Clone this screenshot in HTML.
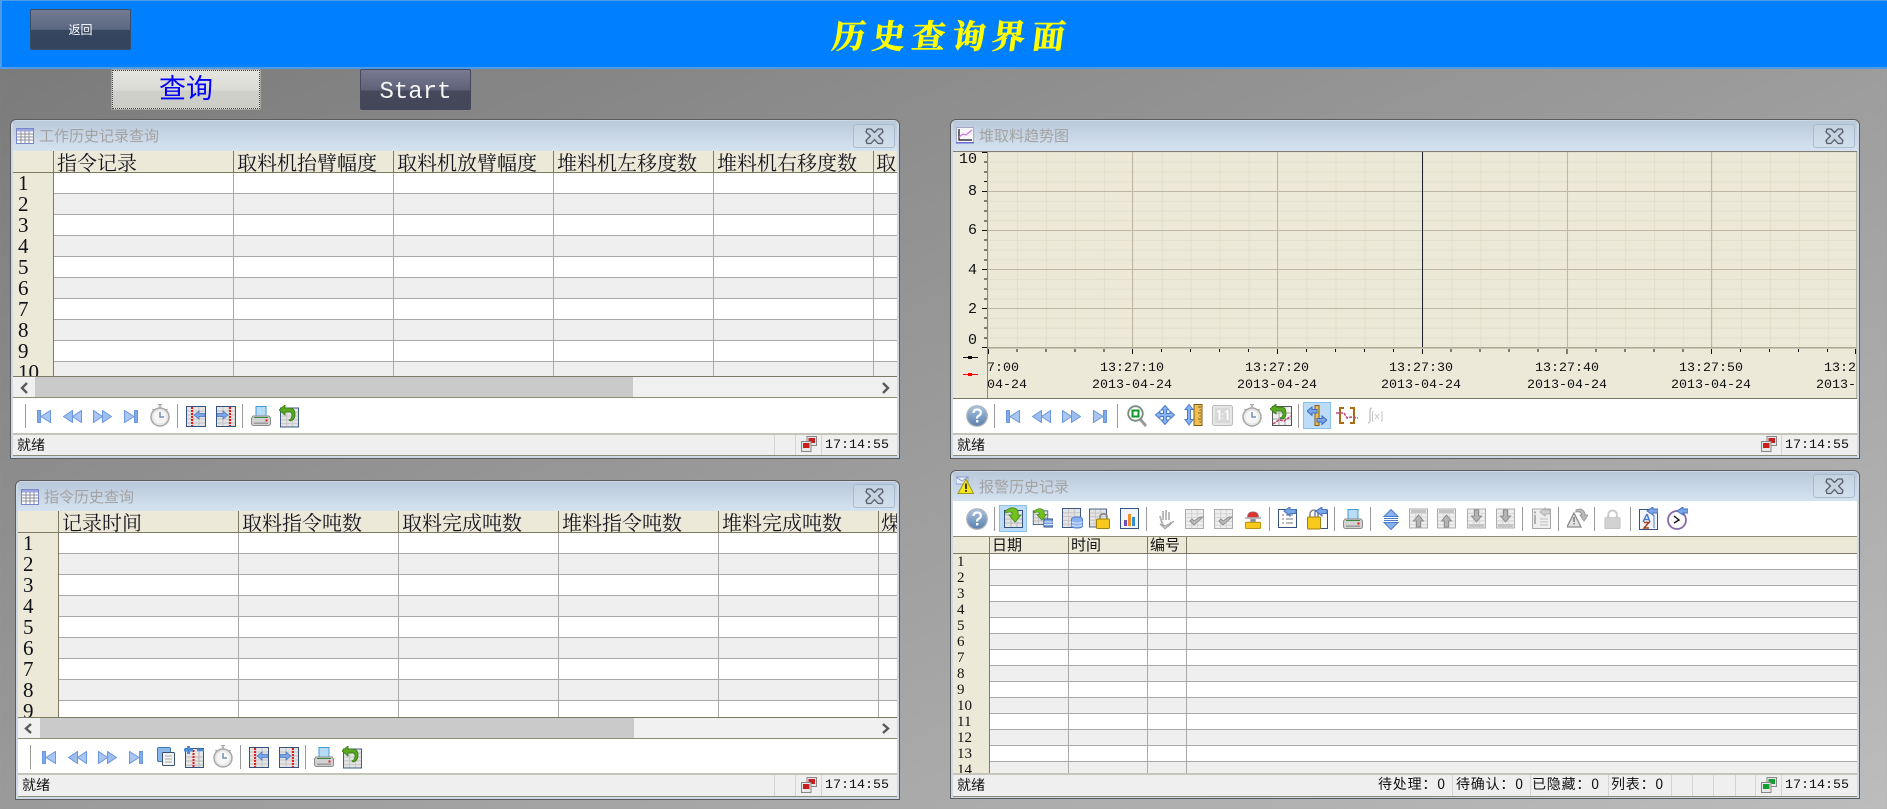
<!DOCTYPE html>
<html lang="zh"><head><meta charset="utf-8"><title>历史查询界面</title>
<style>
html,body{margin:0;padding:0;width:1887px;height:809px;overflow:hidden}
body{position:relative;background:linear-gradient(to bottom right,#787878,#9a9a9a 50%,#bcbcbc);font-family:"Liberation Serif","Noto Serif CJK SC",serif;color:#000}
div{position:absolute;box-sizing:border-box;white-space:nowrap}
.win{background:#d8e4f0;border:1px solid #5c5c5c;border-radius:6px 6px 0 0;box-shadow:inset 0 0 0 2px #cdd9e6}
.tb{height:31px;background:linear-gradient(#bac9da,#d6e4f2)}
.ttl{font:15px/20px "Noto Sans CJK SC",sans-serif;color:#a3a3a3}
.cl{width:42px;height:24px;border:1px solid #a7bbd0;border-radius:3px;background:linear-gradient(#c3d1e0,#d3e0ec)}
.tbl{overflow:hidden;background:#fff}
.rows{background:repeating-linear-gradient(#fff 0 20px,#a9a9a9 20px 21px,#efefef 21px 41px,#a9a9a9 41px 42px)}
.rows4{background:repeating-linear-gradient(#fff 0 15px,#a9a9a9 15px 16px,#efefef 16px 31px,#a9a9a9 31px 32px)}
.hd{top:0;height:22px;background:#ece9d8;border-bottom:1px solid #7d7a64;border-right:1px solid #7d7a64;font:20px/21px "Noto Serif CJK SC",serif;padding-left:3px;color:#15151f;overflow:hidden}
.hd4{top:0;height:17px;background:#ece9d8;border-bottom:1px solid #7d7a64;border-right:1px solid #7d7a64;font:15px/16px "Noto Sans CJK SC",sans-serif;padding-left:2px;color:#111;overflow:hidden}
.rn{left:0;top:22px;bottom:0;background:#ece9d8;border-right:1px solid #7d7a64;font:21px/21px "Liberation Serif",serif;padding-left:5px;white-space:pre-line;overflow:hidden;color:#101018}
.rn4{left:0;top:17px;bottom:0;background:#ece9d8;border-right:1px solid #7d7a64;font:15px/16px "Liberation Serif",serif;padding-left:4px;white-space:pre-line;overflow:hidden;color:#111}
.v{top:0;bottom:0;width:1px;background:#a9a9a9}
.sb{height:21px;background:#f0f0f0;border-top:1px solid #7d7a64}
.th{top:0;height:20px;background:#cacaca}
.bar{background:#fff;border-top:1px solid #8f8c78}
.st{height:23px;background:#efefef;border-top:2px solid #c4c4b8;border-bottom:1px solid #8a8a78;font:14px/21px "Noto Sans CJK SC",sans-serif;padding-left:4px;color:#111}
.clk{font:13.33px/21px "Liberation Mono",monospace;color:#111}
.sp{top:0;bottom:0;width:1px;background:#d4d4d4}
.tk{font:13.33px/16px "Liberation Mono",monospace;color:#111;text-align:center;width:100px}
.yl{font:15px/16px "Liberation Mono",monospace;color:#111;text-align:right;width:24px;left:953px}
.cnt{top:-1px;letter-spacing:.8px}
</style></head>
<body>

<div style="left:0;top:0;width:1887px;height:69px;background:#0080ff;border:1px solid #4d9be8;border-width:1px 0 2px 2px"></div>
<div style="left:30px;top:9px;width:101px;height:41px;border:1px solid #3b4c66;border-radius:2px;background:linear-gradient(#737b92,#5a6781 50%,#34455f 52%,#34445f);color:#fff;font:12px/40px 'Noto Sans CJK SC',sans-serif;text-align:center">返回</div>
<div style="left:0;top:13px;width:1905px;height:44px;text-align:center;font:700 33px/44px 'Noto Serif CJK SC',serif;color:#ffff00;letter-spacing:7px;-webkit-text-stroke:.7px #ffff00;transform:skewX(-7deg)">历史查询界面</div>

<div style="left:111px;top:69px;width:150px;height:41px;border:1px solid #a9a9a4;border-radius:2px;background:linear-gradient(#e6e6e0,#dcdcd6 50%,#d0d0ca 55%,#cdcdc7);box-shadow:inset 0 0 0 1px #ddd"></div>
<div style="left:112px;top:70px;width:148px;height:39px;border:1px dotted #444;color:#0000ff;font:27px/32px 'Noto Sans CJK SC',sans-serif;text-align:center">查询</div>
<div style="left:360px;top:69px;width:111px;height:41px;border:1px solid #44485a;border-radius:2px;background:linear-gradient(#777a90,#5f6278 50%,#45475a 55%,#44465a);color:#f4f4f4;font:24px/45px 'Liberation Mono',monospace;text-align:center">Start</div>

<!-- Window 1 -->
<div class="win" style="left:10px;top:119px;width:890px;height:340px"></div>
<div class="tb" style="left:13px;top:121px;width:884px"></div>
<div class="ttl" style="left:39px;top:126px">工作历史记录查询</div>
<div class="cl" style="left:853px;top:124px"></div>
<div class="tbl" style="left:13px;top:151px;width:884px;height:226px;border-bottom:1px solid #7d7a64">
<div class="rows" style="left:0;right:0;top:22px;bottom:0"></div>
<div class="v" style="left:220px"></div><div class="v" style="left:380px"></div><div class="v" style="left:540px"></div><div class="v" style="left:700px"></div><div class="v" style="left:860px"></div>
<div class="rn" style="width:41px">1
2
3
4
5
6
7
8
9
10</div>
<div class="hd" style="left:0;width:41px"></div>
<div class="hd" style="left:41px;width:180px">指令记录</div>
<div class="hd" style="left:221px;width:160px">取料机抬臂幅度</div>
<div class="hd" style="left:381px;width:160px">取料机放臂幅度</div>
<div class="hd" style="left:541px;width:160px">堆料机左移度数</div>
<div class="hd" style="left:701px;width:160px">堆料机右移度数</div>
<div class="hd" style="left:861px;width:23px;border-right:0;padding-left:2px">取</div>
</div>
<div class="sb" style="left:13px;top:376px;width:884px"><div class="th" style="left:22px;width:598px"></div></div>
<div class="bar" style="left:13px;top:397px;width:884px;height:37px"></div>
<div class="st" style="left:13px;top:433px;width:884px;height:23px">就绪<div class="sp" style="left:761px"></div><div class="sp" style="left:782px"></div><div class="sp" style="left:808px"></div><div class="clk" style="left:812px;top:0">17:14:55</div></div>

<!-- Window 2 -->
<div class="win" style="left:15px;top:480px;width:885px;height:320px"></div>
<div class="tb" style="left:18px;top:482px;width:879px"></div>
<div class="ttl" style="left:44px;top:487px">指令历史查询</div>
<div class="cl" style="left:853px;top:484px"></div>
<div class="tbl" style="left:18px;top:511px;width:879px;height:207px;border-bottom:1px solid #7d7a64">
<div class="rows" style="left:0;right:0;top:22px;bottom:0"></div>
<div class="v" style="left:220px"></div><div class="v" style="left:380px"></div><div class="v" style="left:540px"></div><div class="v" style="left:700px"></div><div class="v" style="left:860px"></div>
<div class="rn" style="width:41px">1
2
3
4
5
6
7
8
9</div>
<div class="hd" style="left:0;width:41px"></div>
<div class="hd" style="left:41px;width:180px">记录时间</div>
<div class="hd" style="left:221px;width:160px">取料指令吨数</div>
<div class="hd" style="left:381px;width:160px">取料完成吨数</div>
<div class="hd" style="left:541px;width:160px">堆料指令吨数</div>
<div class="hd" style="left:701px;width:160px">堆料完成吨数</div>
<div class="hd" style="left:861px;width:18px;border-right:0;padding-left:2px">煤</div>
</div>
<div class="sb" style="left:18px;top:717px;width:879px"><div class="th" style="left:22px;width:594px"></div></div>
<div class="bar" style="left:18px;top:738px;width:879px;height:36px"></div>
<div class="st" style="left:18px;top:773px;width:879px;height:24px">就绪<div class="sp" style="left:756px"></div><div class="sp" style="left:777px"></div><div class="sp" style="left:803px"></div><div class="clk" style="left:807px;top:0">17:14:55</div></div>

<!-- Window 3 -->
<div class="win" style="left:950px;top:119px;width:910px;height:340px"></div>
<div class="tb" style="left:953px;top:121px;width:904px"></div>
<div class="ttl" style="left:979px;top:126px">堆取料趋势图</div>
<div class="cl" style="left:1813px;top:124px"></div>
<div style="left:953px;top:151px;width:904px;height:248px;background:#ece9d8;border-top:1px solid #7f7f72;border-bottom:1px solid #7d7a64"></div>
<div class="yl" style="top:152px">10</div><div class="yl" style="top:184px">8</div><div class="yl" style="top:223px">6</div><div class="yl" style="top:263px">4</div><div class="yl" style="top:302px">2</div><div class="yl" style="top:333px">0</div>
<div style="left:988px;top:348px;width:868px;height:50px;overflow:hidden">
<div class="tk" style="left:-51px;top:13px">13:27:00</div><div class="tk" style="left:-51px;top:30px">2013-04-24</div>
<div class="tk" style="left:94px;top:13px">13:27:10</div><div class="tk" style="left:94px;top:30px">2013-04-24</div>
<div class="tk" style="left:239px;top:13px">13:27:20</div><div class="tk" style="left:239px;top:30px">2013-04-24</div>
<div class="tk" style="left:383px;top:13px">13:27:30</div><div class="tk" style="left:383px;top:30px">2013-04-24</div>
<div class="tk" style="left:529px;top:13px">13:27:40</div><div class="tk" style="left:529px;top:30px">2013-04-24</div>
<div class="tk" style="left:673px;top:13px">13:27:50</div><div class="tk" style="left:673px;top:30px">2013-04-24</div>
<div class="tk" style="left:818px;top:13px">13:28:00</div><div class="tk" style="left:818px;top:30px">2013-04-24</div>
</div>
<div class="bar" style="left:953px;top:399px;width:904px;height:35px;border-top:0"></div>
<div class="st" style="left:953px;top:433px;width:904px;height:23px">就绪<div class="sp" style="left:828px"></div><div class="clk" style="left:832px;top:0">17:14:55</div></div>

<!-- Window 4 -->
<div class="win" style="left:950px;top:470px;width:910px;height:329px"></div>
<div class="tb" style="left:953px;top:472px;width:904px"></div>
<div class="ttl" style="left:979px;top:477px">报警历史记录</div>
<div class="cl" style="left:1813px;top:474px"></div>
<div class="bar" style="left:953px;top:501px;width:904px;height:36px;border-top:0"></div>
<div class="tbl" style="left:953px;top:536px;width:904px;height:238px;border-top:1px solid #8f8c78;border-bottom:1px solid #7d7a64">
<div class="rows4" style="left:0;right:0;top:17px;bottom:0"></div>
<div class="v" style="left:115px"></div><div class="v" style="left:194px"></div><div class="v" style="left:233px"></div>
<div class="rn4" style="width:37px">1
2
3
4
5
6
7
8
9
10
11
12
13
14</div>
<div class="hd4" style="left:0;width:37px"></div>
<div class="hd4" style="left:37px;width:79px">日期</div>
<div class="hd4" style="left:116px;width:79px">时间</div>
<div class="hd4" style="left:195px;width:39px">编号</div>
<div class="hd4" style="left:234px;width:670px;border-right:0"></div>
</div>
<div class="st" style="left:953px;top:773px;width:904px;height:24px">就绪
<div class="cnt" style="left:425px">待处理：0</div><div class="sp" style="left:499px"></div>
<div class="cnt" style="left:503px">待确认：0</div><div class="sp" style="left:577px"></div>
<div class="cnt" style="left:579px">已隐藏：0</div><div class="sp" style="left:655px"></div>
<div class="cnt" style="left:658px">列表：0</div><div class="sp" style="left:718px"></div><div class="sp" style="left:739px"></div><div class="sp" style="left:760px"></div><div class="sp" style="left:782px"></div><div class="sp" style="left:802px"></div><div class="sp" style="left:828px"></div>
<div class="clk" style="left:832px;top:0">17:14:55</div></div>

<!-- Graphics -->
<svg width="1887" height="809" viewBox="0 0 1887 809" style="position:absolute;left:0;top:0;pointer-events:none" xmlns="http://www.w3.org/2000/svg">
<defs>
<linearGradient id="hb" x1="0" y1="0" x2="0" y2="1"><stop offset="0" stop-color="#a9c4e2"/><stop offset="1" stop-color="#5a80ae"/></linearGradient>
<pattern id="mg" x="988" y="152" width="28.96" height="9.76" patternUnits="userSpaceOnUse"><path d="M0 .5H29M.5 0V10" stroke="#e2dfcd" fill="none"/></pattern>
<symbol id="first" viewBox="0 0 14 13"><path d="M.5 .5h3v12h-3z" fill="#7faaea" stroke="#6b97dc"/><path d="M13.5 .5v12L4 6.500z" fill="#a9c7f2" stroke="#6b97dc"/></symbol>
<symbol id="last" viewBox="0 0 14 13"><path d="M10.500 .5h3v12h-3z" fill="#7faaea" stroke="#6b97dc"/><path d="M.5 .5v12L10 6.500z" fill="#a9c7f2" stroke="#6b97dc"/></symbol>
<symbol id="prev" viewBox="0 0 19 13"><path d="M9.500 .5v12L.5 6.500z" fill="#9dbff0" stroke="#6b97dc"/><path d="M18.500 .5v12l-9-6z" fill="#a9c7f2" stroke="#6b97dc"/></symbol>
<symbol id="next" viewBox="0 0 19 13"><path d="M.5 .5v12l9-6z" fill="#a9c7f2" stroke="#6b97dc"/><path d="M9.500 .5v12l9-6z" fill="#9dbff0" stroke="#6b97dc"/></symbol>
<symbol id="clock" viewBox="0 0 20 23"><path d="M8 .5h4M10 1v3M2.500 5l2 2M17.500 5l-2 2" stroke="#aaa" stroke-width="1.500" fill="none"/><circle cx="10" cy="13" r="9" fill="#e6e6e6" stroke="#a8a8a8" stroke-width="1.500"/><circle cx="10" cy="13" r="6.500" fill="#f6f6f6"/><path d="M10 8v5h4" stroke="#7692b8" stroke-width="1.500" fill="none"/></symbol>
<symbol id="grid" viewBox="0 0 20 21"><rect x=".5" y=".5" width="19" height="20" fill="#e4e4e4" stroke="#355380"/><path d="M1 5h18M1 9h18M1 13h18M1 17h18M7 1v19M13 1v19" stroke="#c4c4c4" fill="none"/></symbol>
<symbol id="ggrid" viewBox="0 0 20 21"><rect x=".5" y=".5" width="19" height="20" fill="#eeeeee" stroke="#a9a9a9"/><path d="M1 5h18M1 9h18M1 13h18M1 17h18M7 1v19M13 1v19" stroke="#d4d4d4" fill="none"/></symbol>
<symbol id="tl" viewBox="0 0 20 21"><use href="#grid" width="20" height="21"/><path d="M6 1v19" stroke="#e81818" stroke-width="2" stroke-dasharray="2 1"/><path d="M8 9l5-4v2.500h6v3h-6V13z" fill="#7aa6e6" stroke="#4573c0" stroke-width=".7"/></symbol>
<symbol id="tr" viewBox="0 0 20 21"><use href="#grid" width="20" height="21"/><path d="M14 1v19" stroke="#e81818" stroke-width="2" stroke-dasharray="2 1"/><path d="M12 9L7 5v2.500H1v3h6V13z" fill="#7aa6e6" stroke="#4573c0" stroke-width=".7"/></symbol>
<symbol id="print" viewBox="0 0 20 21"><path d="M5 .5h10v10H5z" fill="#b8dcf6" stroke="#3d9cd8"/><path d="M2 10h16l1.500 2v5.500a2 2 0 0 1-2 2h-15a2 2 0 0 1-2-2V12z" fill="#d2d2d2" stroke="#8a8a8a"/><path d="M3 11.500h14" stroke="#3d8a3d"/><rect x="14.500" y="13.500" width="2" height="2" fill="#e81818"/><rect x="3" y="16.500" width="14" height="1.500" fill="#9a9a9a"/></symbol>
<symbol id="undo" viewBox="0 0 20 23"><g transform="translate(1 2)"><use href="#grid" width="19" height="21"/></g><path d="M0 5l6-5v3h4q6 0 6 6t-5 7l-1-1q3-1 3-5t-4-3H6v3z" fill="#5aa820" stroke="#2f7a10" stroke-width=".8"/></symbol>
<symbol id="help" viewBox="0 0 22 22"><circle cx="11" cy="11" r="10.300" fill="url(#hb)" stroke="#b4b4b4" stroke-width="1.200"/><path d="M7.500 8q0-3.500 3.700-3.500t3.600 3.200q0 2-2 3t-1.600 2.800" fill="none" stroke="#fff" stroke-width="2.200"/><rect x="10" y="15" width="2.400" height="2.400" fill="#fff"/></symbol>
<symbol id="mag" viewBox="0 0 20 22"><path d="M13 14l6 7" stroke="#9a9a9a" stroke-width="3"/><circle cx="8.500" cy="8.500" r="7.300" fill="#fff" stroke="#7a8a7a" stroke-width="1.800"/><rect x="5.500" y="5.500" width="6" height="6" fill="#fff" stroke="#0a9a2a" stroke-width="2"/></symbol>
<symbol id="move" viewBox="0 0 20 20"><path d="M10 .5l4 4.500h-2.500v3.500H15V6l4.500 4-4.500 4v-2.500h-3.500V15H14l-4 4.500L6 15h2.500v-3.500H5V14L.5 10 5 6v2.500h3.500V5H6z" fill="#8ab2ee" stroke="#4a7ccc"/></symbol>
<symbol id="ruler" viewBox="0 0 19 22"><path d="M10 .5h8v21h-8z" fill="#f2c050" stroke="#7c5a1c"/><path d="M14 3h3M15.500 6h1.500M14 9h3M15.500 12h1.500M14 15h3M15.500 18h1.500" stroke="#7c5a1c"/><path d="M5 .5l4 5H6.500v10H9l-4 5.500-4-5.500h2.500v-10H1z" fill="#8ab2ee" stroke="#4a7ccc"/></symbol>
<symbol id="one" viewBox="0 0 21 21"><rect x=".5" y=".5" width="20" height="20" rx="2" fill="#e6e6e6" stroke="#bcbcbc"/><rect x="3" y="3" width="15" height="15" fill="#d8d8d8"/><path d="M5.500 7l2-1v9M10.500 8.500v1M10.500 12.500v1M13.500 7l2-1v9" stroke="#fff" stroke-width="1.600" fill="none"/></symbol>
<symbol id="cundo" viewBox="0 0 22 22"><rect x="2.500" y="2.500" width="19" height="19" fill="#f2f2f2" stroke="#555"/><path d="M9 3v18M15 3v18M3 9h18M3 15h18" stroke="#aaa"/><path d="M3 20l6-4 5 1 7-5" stroke="#c24a7c" stroke-width="1.500" stroke-dasharray="3 1" fill="none"/><path d="M0 5l6-5v3h4q6 0 6 6t-5 6l-1-1q3-1 3-4t-4-3H6v3z" fill="#5aa820" stroke="#2f7a10" stroke-width=".8"/></symbol>
<symbol id="cursor" viewBox="0 0 20 21"><rect x="8" y=".5" width="4" height="20" fill="#f2c050" stroke="#7c5a1c"/><path d="M0 6l5-4v2.500h5v3.500H5v2.500zM20 15l-5-4v2.500h-5V17h5v2.500z" fill="#7aa6e6" stroke="#3a6cc0"/></symbol>
<symbol id="brack" viewBox="0 0 22 17"><path d="M8 1H4v15h4M14 1h4v15h-4" fill="none" stroke="#b06a14" stroke-width="2"/><path d="M0 6h4l4 0 3 5 4-1 7 1" stroke="#c04a7c" stroke-dasharray="3 1" stroke-width="1.500" fill="none"/></symbol>
<symbol id="fx" viewBox="0 0 16 17"><path d="M5 1Q3 1 3 4v9q0 3-2 3" fill="none" stroke="#c4c4c4" stroke-width="1.300"/><path d="M6.500 5H5.500v9h1M14 5h1v9h-1M8 7l4 5M12 7l-4 5" fill="none" stroke="#c4c4c4"/></symbol>
<symbol id="net" viewBox="0 0 16 16"><rect x="6" y=".5" width="9.500" height="9" fill="#e8e8e8" stroke="#888"/><rect x="7.500" y="2" width="6.500" height="5" fill="#c81e1e"/><rect x=".5" y="5.500" width="9.500" height="10" fill="#e8e8e8" stroke="#888"/><rect x="2" y="7" width="6.500" height="5" fill="#c81e1e"/></symbol>
<symbol id="netg" viewBox="0 0 16 16"><rect x="6" y=".5" width="9.500" height="9" fill="#e8e8e8" stroke="#888"/><rect x="7.500" y="2" width="6.500" height="5" fill="#10a030"/><rect x=".5" y="5.500" width="9.500" height="10" fill="#e8e8e8" stroke="#888"/><rect x="2" y="7" width="6.500" height="5" fill="#10a030"/></symbol>
<symbol id="sepx" viewBox="0 0 1 24"><rect width="1" height="24" fill="#999"/></symbol>
<symbol id="tblicon" viewBox="0 0 18 16"><rect x=".5" y=".5" width="17" height="15" fill="#fff" stroke="#7b86c8"/><rect x="1" y="1" width="16" height="2.500" fill="#9aa6dc"/><path d="M1 6h16M1 9h16M1 12h16M5 3v12M9 3v12M13 3v12" stroke="#8c8c9c"/></symbol>
<symbol id="chicon" viewBox="0 0 18 17"><rect x=".5" y=".5" width="17" height="15" fill="#f8f8fc" stroke="#a8a8c8"/><path d="M3 2v11h13" stroke="#111" stroke-width="1.200" fill="none"/><path d="M3 10l4-3 3 1 6-5" stroke="#d070e8" stroke-width="1.200" fill="none"/><rect y="15" width="18" height="1.500" fill="#6a6ad0"/></symbol>
<symbol id="alarm" viewBox="0 0 18 18"><path d="M0 1h12v7H0z" fill="#e8eefc" stroke="#8a9ad0"/><path d="M0 1l6 4 6-4" fill="none" stroke="#8a9ad0"/><path d="M10 3l7.500 14.500H2z" fill="#f6e51e" stroke="#9a9a20"/><rect x="9.200" y="7.500" width="1.600" height="5.500" fill="#111"/><rect x="9.200" y="14" width="1.600" height="1.800" fill="#111"/></symbol>
<symbol id="down" viewBox="0 0 21 21"><rect x="1.500" y="3.500" width="18" height="17" fill="#e4e4e4" stroke="#355380"/><path d="M2 8h17M2 12h17M2 16h17M8 4v16M14 4v16" stroke="#b8b8b8"/><path d="M2 5q4-5 9-4 5 1 4 7h3l-6 7-6-7h3q1-3-2-3-2 0-4 1z" fill="#74c020" stroke="#3c8a10" stroke-width=".8"/></symbol>
<symbol id="downdb" viewBox="0 0 21 21"><use href="#down" width="17" height="19"/><path d="M12 12h9v8h-9z" fill="#7aa6e6" stroke="#355380"/><path d="M12 15h9M12 17.500h9" stroke="#d0e0f8"/></symbol>
<symbol id="griddb" viewBox="0 0 21 21"><use href="#grid" width="19" height="20"/><ellipse cx="15" cy="11" rx="5.500" ry="2" fill="#8ab2ee" stroke="#4a7ccc"/><path d="M9.500 11v7q0 2 5.500 2t5.500-2v-7" fill="#8ab2ee" stroke="#4a7ccc"/><path d="M9.500 14q5.500 2.500 11 0M9.500 17q5.500 2.500 11 0" stroke="#d8e6fa" fill="none"/></symbol>
<symbol id="gridlock" viewBox="0 0 21 21"><use href="#grid" width="18" height="20"/><path d="M11 11V8a4 4 0 0 1 7 0v3" fill="none" stroke="#888" stroke-width="1.600"/><rect x="7.500" y="11" width="13" height="9.500" rx="1" fill="#f6c91c" stroke="#a08010"/></symbol>
<symbol id="bars" viewBox="0 0 19 21"><rect x=".5" y=".5" width="18" height="20" fill="#f4f4f8" stroke="#355380"/><rect x="4" y="12" width="3" height="6" fill="#7050b0"/><rect x="8" y="6" width="3" height="12" fill="#f09020"/><rect x="12" y="9" width="3" height="9" fill="#3090d0"/></symbol>
<symbol id="hand" viewBox="0 0 19 21"><path d="M7 2v9M10 1v10M13 3v8M4 7q2 9 5 11 4 0 6-5" fill="none" stroke="#b4b4b4" stroke-width="1.800"/><path d="M4 15l5 5 9-8-5 3-4 2z" fill="#c8c8c8" stroke="#a4a4a4"/></symbol>
<symbol id="chk" viewBox="0 0 19 20"><use href="#ggrid" width="19" height="20"/><path d="M5 12l4 4 9-8-3 0-6 4-2-2z" fill="#bcbcbc" stroke="#909090"/></symbol>
<symbol id="stop" viewBox="0 0 18 20"><path d="M3 7q0-6 6-6t6 6z" fill="#e03030" stroke="#a06060"/><rect x="0" y="7" width="18" height="2" fill="#b8b8b8"/><rect x="6" y="9" width="6" height="3" fill="#8a8aa0"/><rect x=".5" y="12.500" width="17" height="7" rx="1.500" fill="#f6c91c" stroke="#b09010"/></symbol>
<symbol id="listback" viewBox="0 0 19 21"><rect x=".5" y="2.500" width="18" height="18" fill="#fcfcfc" stroke="#355380"/><path d="M4 8h2M4 12h2M4 16h2M8 8h7M8 12h7M8 16h7" stroke="#777"/><path d="M6 4l6-4v2.500h6v4h-6V9z" fill="#7aa6e6" stroke="#4573c0"/></symbol>
<symbol id="lockback" viewBox="0 0 21 23"><rect x="8" y="3.500" width="12.500" height="18" fill="#fcfcfc" stroke="#355380"/><path d="M3 10V7a4 4 0 0 1 8 0v3" fill="none" stroke="#888" stroke-width="1.600"/><rect x=".5" y="10" width="13" height="12" rx="1" fill="#f6c91c" stroke="#a08010"/><path d="M9 4l6-4v2.500h5v4h-5V9z" fill="#7aa6e6" stroke="#4573c0"/></symbol>
<symbol id="updown" viewBox="0 0 16 21"><path d="M8 .5l7 7H1z" fill="#8ab2ee" stroke="#4a7ccc"/><path d="M8 20.500l7-7H1z" fill="#8ab2ee" stroke="#4a7ccc"/><path d="M1 9.500h14M1 11.500h14" stroke="#4a7ccc"/></symbol>
<symbol id="gup" viewBox="0 0 19 21"><use href="#ggrid" width="19" height="21"/><rect x="2" y="2" width="15" height="3" fill="#c4c4c4"/><path d="M9.500 7l5 6h-3v6h-4v-6h-3z" fill="#b4b4b4" stroke="#909090"/></symbol>
<symbol id="gdn" viewBox="0 0 19 21"><use href="#ggrid" width="19" height="21"/><rect x="2" y="16" width="15" height="3" fill="#c4c4c4"/><path d="M7.500 2h4v6h3l-5 6-5-6h3z" fill="#b4b4b4" stroke="#909090"/></symbol>
<symbol id="ginfo" viewBox="0 0 19 22"><rect x=".5" y="2" width="18" height="19.500" fill="#eee" stroke="#a9a9a9"/><path d="M3 8v9" stroke="#b0b0b0" stroke-width="2"/><rect x="2" y="4.500" width="2" height="2" fill="#b0b0b0"/><path d="M8 12h8M8 15h8M8 18h8" stroke="#c0c0c0"/><path d="M8 5l5-4v2h5v4h-5v2z" fill="#d0d0d0" stroke="#b0b0b0"/></symbol>
<symbol id="gwarn" viewBox="0 0 21 21"><path d="M7 1l7 14H0z" transform="translate(0 4)" fill="#e4e4e4" stroke="#8a8a8a" stroke-width="1.300"/><path d="M6.300 9h1.500v5H6.300zM6.300 15h1.500v1.500H6.300z" fill="#777"/><path d="M9 2q8-3 9 5h3l-4 6-4-6h2q-1-4-6-3z" fill="#bbb" stroke="#999"/></symbol>
<symbol id="glock" viewBox="0 0 17 21"><path d="M4 9V6a4.500 4.500 0 0 1 9 0v3" fill="none" stroke="#c8c8c8" stroke-width="2"/><rect x=".5" y="9" width="16" height="11.500" rx="1" fill="#d2d2d2" stroke="#c4c4c4"/></symbol>
<symbol id="az" viewBox="0 0 19 23"><rect x=".5" y="2.500" width="18" height="20" fill="#f4f6fb" stroke="#355380"/><path d="M8 7L4 15M8 7l3 8M5 12.500h5" stroke="#4a7ccc" stroke-width="1.500" fill="none"/><path d="M5 15.500h5l-5 5.500h5" stroke="#a04018" stroke-width="1.500" fill="none"/><path d="M15 8v13" stroke="#4a7ccc"/><path d="M8 4l6-4v2h5v4h-5v2z" fill="#7aa6e6" stroke="#4573c0"/></symbol>
<symbol id="timeb" viewBox="0 0 21 23"><circle cx="10" cy="13" r="9" fill="#fafafa" stroke="#8a6aa8" stroke-width="1.800"/><path d="M7 9l5 4-5 3" fill="none" stroke="#111" stroke-width="1.400"/><path d="M10 4l6-4v2h5v4h-5v2z" fill="#7aa6e6" stroke="#4573c0"/></symbol>
</defs>

<!-- scrollbar chevrons -->
<g fill="none" stroke="#5a5a5a" stroke-width="2.400">
<path d="M27 383l-5 5 5 5M883 383l5 5-5 5M31 724l-5 4.500 5 4.500M883 724l5 4.500-5 4.500"/>
</g>

<!-- close X -->
<g fill="#c6d2de" stroke="#55606c" stroke-width="1.300" stroke-linejoin="round">
<path id="xx" d="M867 129h4l3.500 3.500L878 129h4l1 3-4.500 4 4.500 4.500-1 3h-4l-3.500-4-3.500 4h-4l-1-3 4.500-4.500-4.500-4z"/>
<path transform="translate(0 360)" d="M867 129h4l3.500 3.500L878 129h4l1 3-4.500 4 4.500 4.500-1 3h-4l-3.500-4-3.500 4h-4l-1-3 4.500-4.500-4.500-4z"/>
<path transform="translate(960 0)" d="M867 129h4l3.500 3.500L878 129h4l1 3-4.500 4 4.500 4.500-1 3h-4l-3.500-4-3.500 4h-4l-1-3 4.500-4.500-4.500-4z"/>
<path transform="translate(960 350)" d="M867 129h4l3.500 3.500L878 129h4l1 3-4.500 4 4.500 4.500-1 3h-4l-3.500-4-3.500 4h-4l-1-3 4.500-4.500-4.500-4z"/>
</g>
<use href="#tblicon" x="16" y="128" width="18" height="16"/>
<use href="#tblicon" x="21" y="489" width="18" height="16"/>
<use href="#chicon" x="956" y="127" width="18" height="17"/>
<use href="#alarm" x="956" y="476" width="18" height="18"/>

<!-- Chart -->
<rect x="988" y="152" width="868" height="196" fill="url(#mg)"/>
<g fill="#bdb8a6">
<rect x="1132" y="152" width="1" height="196"/><rect x="1277" y="152" width="1" height="196"/><rect x="1567" y="152" width="1" height="196"/><rect x="1711" y="152" width="1" height="196"/><rect x="1856" y="152" width="1" height="196"/>
<rect x="988" y="191" width="868" height="1"/><rect x="988" y="230" width="868" height="1"/><rect x="988" y="269" width="868" height="1"/><rect x="988" y="308" width="868" height="1"/>
</g>
<rect x="1422" y="152" width="1" height="196" fill="#1c1c2c"/>
<rect x="987" y="152" width="1" height="246" fill="#8a8774"/>
<rect x="988" y="347" width="868" height="1.500" fill="#a8a592"/>
<rect x="1856" y="152" width="1" height="246" fill="#b8b5a2"/>
<path d="M982 152.500h5M984 162h3M984 172h3M984 181.500h3M982 191.500h5M984 201h3M984 211h3M984 221h3M982 230.500h5M984 240h3M984 250h3M984 260h3M982 269.500h5M984 279h3M984 289h3M984 299h3M982 308.500h5M984 318h3M984 328h3M984 338h3M982 347.500h5" stroke="#111" fill="none"/>
<path d="M988.500 349v5M1017 349v3M1046 349v3M1075 349v3M1104 349v3M1132.500 349v5M1161.500 349v3M1190.500 349v3M1219.500 349v3M1248.500 349v3M1277.500 349v5M1306.500 349v3M1335.500 349v3M1364.500 349v3M1393.500 349v3M1422.500 349v5M1451 349v3M1480 349v3M1509 349v3M1538 349v3M1567 349v5M1596 349v3M1625 349v3M1654 349v3M1683 349v3M1711.500 349v5M1740.500 349v3M1769.500 349v3M1798.500 349v3M1827.500 349v3M1855.500 349v5" stroke="#111" fill="none"/>
<path d="M963 357.500h15" stroke="#111"/><rect x="968" y="356" width="4" height="3" fill="#111"/>
<path d="M963 374.500h15" stroke="#f00"/><rect x="968" y="373" width="4" height="3" fill="#f00"/>

<!-- toolbar win1 -->
<use href="#sepx" x="25" y="404" width="1" height="24"/>
<use href="#first" x="37" y="410" width="14" height="13"/><use href="#prev" x="63" y="410" width="19" height="13"/><use href="#next" x="93" y="410" width="19" height="13"/><use href="#last" x="124" y="410" width="14" height="13"/>
<use href="#clock" x="150" y="404" width="20" height="23"/>
<use href="#sepx" x="177" y="404" width="1" height="24"/>
<use href="#tl" x="186" y="406" width="20" height="21"/><use href="#tr" x="216" y="406" width="20" height="21"/>
<use href="#sepx" x="242" y="404" width="1" height="24"/>
<use href="#print" x="251" y="406" width="20" height="21"/><use href="#undo" x="279" y="405" width="20" height="23"/>

<!-- toolbar win2 -->
<use href="#sepx" x="30" y="745" width="1" height="24"/>
<use href="#first" x="42" y="751" width="14" height="13"/><use href="#prev" x="68" y="751" width="19" height="13"/><use href="#next" x="98" y="751" width="19" height="13"/><use href="#last" x="129" y="751" width="14" height="13"/>
<g><rect x="157.500" y="747.500" width="13" height="14" rx="1.500" fill="#8ab8e8" stroke="#3d78b8"/><rect x="162.500" y="752.500" width="12" height="13" rx="1" fill="#f2f2f2" stroke="#3a5070"/><path d="M165 756h7M165 759h7M165 762h7" stroke="#aaa"/></g>
<g><rect x="185.500" y="748.500" width="18" height="19" fill="#e6e6e6" stroke="#355380"/><path d="M186 757h17M186 761h17M186 765h17M199 749v18" stroke="#b8b8b8"/><path d="M193.500 750v17" stroke="#e81818" stroke-width="2" stroke-dasharray="2 1"/><path d="M184 750h9M188.500 746v8" stroke="#4a8cdc" stroke-width="3"/><path d="M197 750h7" stroke="#4a8cdc" stroke-width="2.500"/></g>
<use href="#clock" x="213" y="745" width="20" height="23"/>
<use href="#sepx" x="240" y="745" width="1" height="24"/>
<use href="#tl" x="249" y="747" width="20" height="21"/><use href="#tr" x="279" y="747" width="20" height="21"/>
<use href="#sepx" x="305" y="745" width="1" height="24"/>
<use href="#print" x="314" y="747" width="20" height="21"/><use href="#undo" x="342" y="746" width="20" height="23"/>

<!-- toolbar win3 -->
<use href="#help" x="966" y="405" width="22" height="22"/>
<use href="#sepx" x="994" y="404" width="1" height="24"/>
<use href="#first" x="1006" y="410" width="14" height="13"/><use href="#prev" x="1032" y="410" width="19" height="13"/><use href="#next" x="1062" y="410" width="19" height="13"/><use href="#last" x="1093" y="410" width="14" height="13"/>
<use href="#sepx" x="1117" y="404" width="1" height="24"/>
<use href="#mag" x="1127" y="405" width="20" height="22"/><use href="#move" x="1155" y="405" width="20" height="20"/><use href="#ruler" x="1184" y="404" width="19" height="22"/><use href="#one" x="1212" y="405" width="21" height="21"/><use href="#clock" x="1242" y="404" width="20" height="23"/><use href="#cundo" x="1270" y="404" width="22" height="22"/>
<use href="#sepx" x="1298" y="404" width="1" height="24"/>
<rect x="1303.500" y="402.500" width="27" height="26" fill="#bcdcf8" stroke="#8cc0ec"/>
<use href="#cursor" x="1307" y="405" width="20" height="21"/><use href="#brack" x="1336" y="407" width="22" height="17"/><use href="#fx" x="1367" y="407" width="16" height="17"/>

<!-- toolbar win4 -->
<use href="#help" x="966" y="508" width="22" height="22"/>
<use href="#sepx" x="994" y="507" width="1" height="24"/>
<rect x="999.500" y="505.500" width="27" height="26" fill="#bcdcf8" stroke="#8cc0ec"/>
<use href="#down" x="1003" y="507" width="21" height="21"/><use href="#downdb" x="1032" y="507" width="21" height="21"/><use href="#griddb" x="1062" y="508" width="21" height="21"/><use href="#gridlock" x="1089" y="508" width="21" height="21"/><use href="#bars" x="1120" y="508" width="19" height="21"/>
<use href="#sepx" x="1146" y="507" width="1" height="24"/>
<use href="#hand" x="1156" y="509" width="19" height="21"/><use href="#chk" x="1185" y="509" width="19" height="20"/><use href="#chk" x="1214" y="509" width="19" height="20"/><use href="#stop" x="1244" y="511" width="18" height="18"/>
<use href="#sepx" x="1269" y="507" width="1" height="24"/>
<use href="#listback" x="1278" y="507" width="19" height="21"/><use href="#lockback" x="1307" y="507" width="21" height="23"/>
<use href="#sepx" x="1334" y="507" width="1" height="24"/>
<use href="#print" x="1343" y="509" width="20" height="21"/>
<use href="#sepx" x="1370" y="507" width="1" height="24"/>
<use href="#updown" x="1383" y="509" width="16" height="21"/>
<use href="#gup" x="1409" y="508" width="19" height="21"/><use href="#gup" x="1437" y="508" width="19" height="21"/><use href="#gdn" x="1467" y="508" width="19" height="21"/><use href="#gdn" x="1496" y="508" width="19" height="21"/>
<use href="#sepx" x="1522" y="507" width="1" height="24"/>
<use href="#ginfo" x="1532" y="507" width="19" height="22"/>
<use href="#sepx" x="1558" y="507" width="1" height="24"/>
<use href="#gwarn" x="1567" y="508" width="21" height="21"/>
<use href="#sepx" x="1594" y="507" width="1" height="24"/>
<use href="#glock" x="1604" y="509" width="17" height="20"/>
<use href="#sepx" x="1630" y="507" width="1" height="24"/>
<use href="#az" x="1639" y="507" width="19" height="23"/><use href="#timeb" x="1667" y="507" width="21" height="23"/>

<!-- status icons -->
<use href="#net" x="801" y="436" width="16" height="16"/>
<use href="#net" x="801" y="777" width="16" height="16"/>
<use href="#net" x="1761" y="436" width="16" height="16"/>
<use href="#netg" x="1761" y="777" width="16" height="16"/>
</svg>
</body></html>
